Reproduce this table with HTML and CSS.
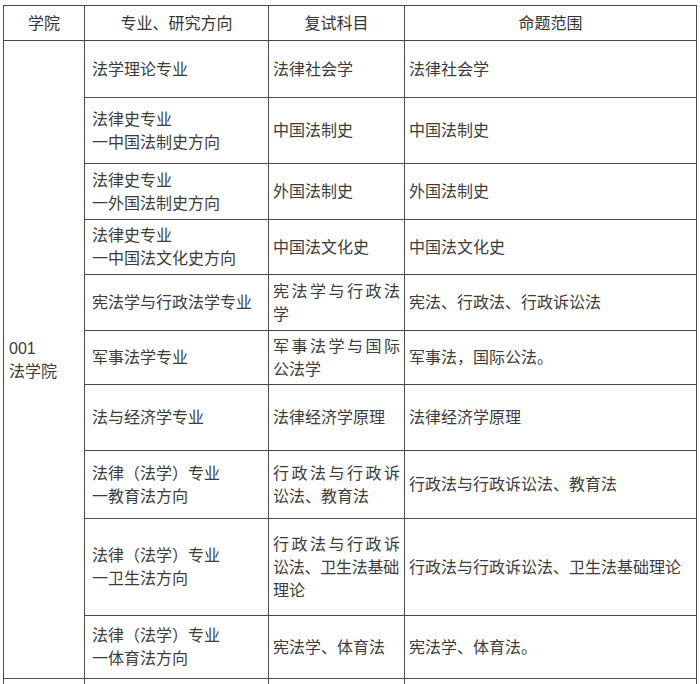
FILE: index.html
```html
<!DOCTYPE html>
<html lang="zh-CN">
<head>
<meta charset="utf-8">
<title>复试科目</title>
<link rel="stylesheet" href="styles.css">
</head>
<body>
<table class="grid">
  <colgroup>
    <col class="c1"><col class="c2"><col class="c3"><col class="c4">
  </colgroup>
  <thead>
    <tr class="h-head">
      <th>学院</th>
      <th>专业、研究方向</th>
      <th>复试科目</th>
      <th>命题范围</th>
    </tr>
  </thead>
  <tbody>
    <tr class="h57">
      <td class="school" rowspan="10">001<br>法学院</td>
      <td class="major">法学理论专业</td>
      <td class="subj">法律社会学</td>
      <td class="scope">法律社会学</td>
    </tr>
    <tr class="h66">
      <td class="major">法律史专业<br>一中国法制史方向</td>
      <td class="subj">中国法制史</td>
      <td class="scope">中国法制史</td>
    </tr>
    <tr class="h56">
      <td class="major">法律史专业<br>一外国法制史方向</td>
      <td class="subj">外国法制史</td>
      <td class="scope">外国法制史</td>
    </tr>
    <tr class="h55">
      <td class="major">法律史专业<br>一中国法文化史方向</td>
      <td class="subj">中国法文化史</td>
      <td class="scope">中国法文化史</td>
    </tr>
    <tr class="h56">
      <td class="major">宪法学与行政法学专业</td>
      <td class="subj"><span class="ln j">宪法学与行政法</span><span class="ln">学</span></td>
      <td class="scope">宪法、行政法、行政诉讼法</td>
    </tr>
    <tr class="h54">
      <td class="major">军事法学专业</td>
      <td class="subj"><span class="ln j">军事法学与国际</span><span class="ln">公法学</span></td>
      <td class="scope">军事法，国际公法。</td>
    </tr>
    <tr class="h66">
      <td class="major">法与经济学专业</td>
      <td class="subj">法律经济学原理</td>
      <td class="scope">法律经济学原理</td>
    </tr>
    <tr class="h68">
      <td class="major">法律（法学）专业<br>一教育法方向</td>
      <td class="subj"><span class="ln j">行政法与行政诉</span><span class="ln">讼法、教育法</span></td>
      <td class="scope">行政法与行政诉讼法、教育法</td>
    </tr>
    <tr class="h97">
      <td class="major">法律（法学）专业<br>一卫生法方向</td>
      <td class="subj"><span class="ln j">行政法与行政诉</span><span class="ln nw tight">讼法、卫生法基础</span><span class="ln">理论</span></td>
      <td class="scope">行政法与行政诉讼法、卫生法基础理论</td>
    </tr>
    <tr class="h63">
      <td class="major">法律（法学）专业<br>一体育法方向</td>
      <td class="subj">宪法学、体育法</td>
      <td class="scope">宪法学、体育法。</td>
    </tr>
    <tr class="h-tail">
      <td></td><td></td><td></td><td></td>
    </tr>
  </tbody>
</table>
</body>
</html>
```
FILE: styles.css
```css
html, body {
  margin: 0;
  padding: 0;
  background: #ffffff;
  overflow: hidden;
}

body {
  padding: 5px 0 0 3px;
  font-family: "Liberation Sans", "Noto Sans CJK SC", sans-serif;
  font-size: 16px;
  color: #3c3c3c;
}

.grid {
  border-collapse: collapse;
  table-layout: fixed;
  width: 693px;
}

.c1 { width: 81px; }
.c2 { width: 184px; }
.c3 { width: 136px; }
.c4 { width: 292px; }

.grid th,
.grid td {
  border: 1px solid #4a4a4a;
  vertical-align: middle;
  line-height: 23px;
  padding: 0 4px;
  text-align: left;
}

.grid th {
  font-weight: normal;
  text-align: center;
  color: #333333;
}

.h-head { height: 35px; }
.h54 { height: 54px; }
.h55 { height: 55px; }
.h56 { height: 56px; }
.h57 { height: 57px; }
.h63 { height: 63px; }
.h66 { height: 66px; }
.h68 { height: 68px; }
.h97 { height: 97px; }
.h-tail { height: 6px; }

.grid td.school { padding-left: 5px; }
.grid td.major { padding-left: 7px; }
.grid td.subj { padding-left: 4px; padding-right: 4px; }
.grid td.scope { padding-left: 4px; }

.ln { display: block; }
.j { text-align: justify; text-align-last: justify; }
.nw { white-space: nowrap; }
.tight { letter-spacing: -0.25px; }
```
